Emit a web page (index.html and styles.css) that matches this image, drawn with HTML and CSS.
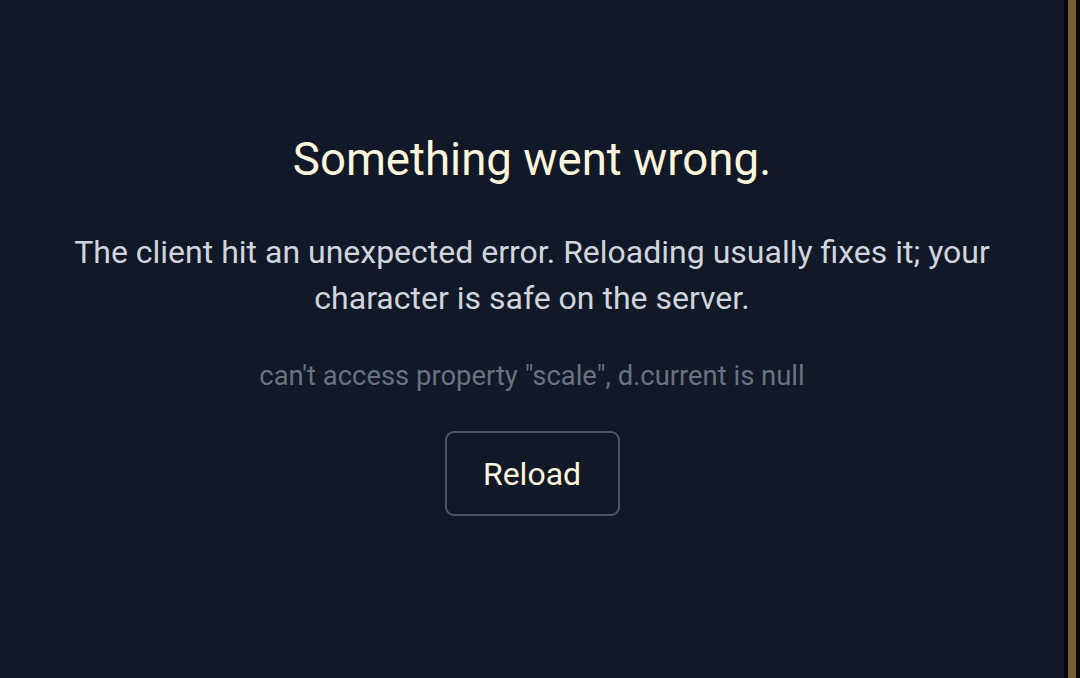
FILE: index.html
```html
<!DOCTYPE html>
<html lang="en">
<head>
<meta charset="utf-8">
<link rel="stylesheet" href="styles.css">
</head>
<body>
<div class="app">
  <main class="error-screen">
    <h1 class="title">Something went wrong.</h1>
    <p class="message">The client hit an unexpected error. Reloading usually fixes it; your character is safe on the server.</p>
    <p class="detail">can't access property "scale", d.current is null</p>
    <button class="reload">Reload</button>
  </main>
  <div class="edge"><div class="edge-bar"></div></div>
</div>
</body>
</html>
```
FILE: styles.css
```css
* { box-sizing: border-box; }
html, body { margin: 0; padding: 0; height: 100%; }
body {
  background: #111827;
  font-family: Roboto, "Liberation Sans", sans-serif;
}
.app {
  display: flex;
  height: 678px;
  width: 1080px;
}
.error-screen {
  flex: 1;
  display: flex;
  flex-direction: column;
  align-items: center;
  padding: 130px 40px 0;
  text-align: center;
}
.title {
  margin: 0;
  font-size: 45.6px;
  font-weight: 400;
  line-height: 60px;
  color: #fdf6dc;
}
.message {
  margin: 39px 0 0;
  font-size: 32px;
  line-height: 46px;
  color: #d1d5db;
}
.detail {
  margin: 35px 0 0;
  font-size: 27.4px;
  line-height: 40px;
  color: #6b7280;
}
.reload {
  margin-top: 35px;
  width: 175px;
  height: 85px;
  background: transparent;
  border: 2px solid #4b5563;
  border-radius: 9px;
  color: #fdf6dc;
  font-family: Roboto, "Liberation Sans", sans-serif;
  font-size: 32px;
}
.edge {
  width: 16px;
  background: #0b0907;
  display: flex;
  justify-content: center;
  padding-right: 1px;
}
.edge-bar {
  width: 8px;
  background: #7a5c37;
}
```
